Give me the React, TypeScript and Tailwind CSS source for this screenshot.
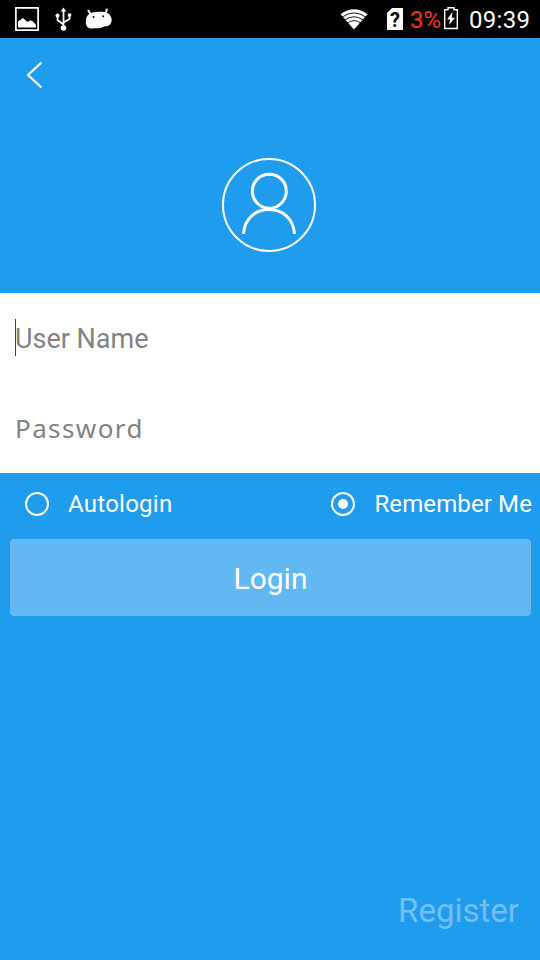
import { clsx } from "clsx";

function StatusBar() {
  return (
    <header className="flex h-[38px] items-center bg-black text-2xl leading-[38px] text-white">
      <svg className="ml-[15px] h-6 w-6" viewBox="0 0 24 24" fill="none">
        <path d="M.9 .9H23.1V23.1H.9Z" stroke="#fff" strokeWidth="1.7" />
        <path d="M3 20.5V14.5L8 11L12.5 15L15 13.5L17.5 14L21 18V20.5Z" fill="#fff" />
      </svg>
      <svg className="ml-4 h-6 w-[17px]" viewBox="0 0 17 24" fill="none" stroke="#fff" strokeWidth="1.8">
        <path d="M8.5 3V21M2.5 9V13L8.5 17.5M14.5 9V12L8.5 15.5" />
        <path d="M5.7 4.5L8.5 .5L11.3 4.5ZM12.8 6.5H16.2V9.5H12.8Z" fill="#fff" stroke="none" />
        <circle cx="2.5" cy="8.5" r="2" fill="#fff" stroke="none" />
        <circle cx="8.5" cy="21" r="2.8" fill="#fff" stroke="none" />
      </svg>
      <svg className="ml-[13px] h-6 w-[27px]" viewBox="0 0 27 24">
        <path d="M3.4 3.6L5.5 7M21.8 2.4L20.8 6" stroke="#fff" strokeWidth="2" strokeLinecap="round" />
        <path
          d="M0.8 14.5C1 9 4 6 9 5.3C12 4.7 14 5 16.5 4.8C21.5 4.4 26 7.5 26.6 12C27 16.5 24.5 19.3 20.5 19.3C18.5 19.3 17.5 20.8 14 21.2C11.5 21.4 10.5 20.8 8 21.4C3.5 22.2 0.7 19.5 0.8 14.5Z"
          fill="#fff"
        />
        <circle cx="8.5" cy="10" r="1" />
        <circle cx="18.2" cy="9.2" r="1" />
      </svg>

      <svg className="mt-px ml-[228px] h-[21px] w-7" viewBox="0 0 28 21" fill="none">
        <path d="M0.5 5.3Q14 -4.8 27.5 5.3L14 20.5Z" fill="#fff" />
        <path d="M2 8.2Q14 -.4 26 8.2M4.3 11.3Q14 4.2 23.7 11.3M7 14.2Q14 9 21 14.2" stroke="#000" strokeWidth=".9" />
      </svg>
      <span className="relative ml-[19px] h-[22px] w-4">
        <svg className="h-[22px] w-4" viewBox="0 0 16 22">
          <path d="M5 0H16V22H0V5Z" fill="#fff" />
        </svg>
        <span className="absolute inset-0 text-center text-xl leading-[24px] font-bold text-black">?</span>
      </span>
      <span className="ml-[7px] w-[34px] pt-px text-[#f8371f]">3%</span>
      <svg className="-mt-[1px] h-[23px] w-[14px]" viewBox="0 0 14 23" fill="none">
        <path d="M.7 2.7H4V.7H10V2.7H13.3V21.5H.7Z" stroke="#fff" strokeWidth="1.4" />
        <path d="M8.5 5L3 12.5H6.2L5 18L11 10.7H7.8Z" fill="#fff" />
      </svg>
      <time className="ml-[11px] pt-px tracking-[0.3px]">09:39</time>
    </header>
  );
}

function Radio({ label, checked, className }: { label: string; checked?: boolean; className?: string }) {
  return (
    <label className={clsx("flex items-center text-2xl leading-[62px]", className)}>
      <span className="mr-[19px] flex h-6 w-6 items-center justify-center rounded-full border-2 border-white">
        {checked && <span className="h-[10px] w-[10px] rounded-full bg-white" />}
      </span>
      {label}
    </label>
  );
}

export default function App() {
  return (
    <main className="flex h-[960px] w-[540px] flex-col overflow-hidden bg-[#209cee] font-[Roboto,sans-serif] text-white">
      <StatusBar />

      <section className="flex h-[255px] flex-col">
        <svg className="mt-[23px] ml-[26px] h-7 w-[17px] shrink-0" viewBox="0 0 17 28" fill="none" stroke="#fff" strokeWidth="2.2">
          <path d="M15.5 1.5L2 14L15.5 26.5" />
        </svg>
        <svg className="mt-[69px] ml-[222px] h-[94px] w-[94px] shrink-0" viewBox="0 0 94 94" fill="none" stroke="#fff">
          <circle cx="47" cy="47" r="46" strokeWidth="2" />
          <circle cx="47.3" cy="33.2" r="17" strokeWidth="3" />
          <path d="M21.5 76C22.5 61 33 51.5 47 51.5S71.5 61 72.5 76" strokeWidth="3" />
        </svg>
      </section>

      <section className="flex h-[180px] flex-col bg-white pl-[15px] text-[27px] text-[#828282]">
        <div className="flex h-[90px] items-center">
          <span className="-mr-px mb-[2px] h-[37px] w-px bg-[#404040]" />
          <span className="pt-[2px]">User Name</span>
        </div>
        <div className="flex h-[90px] items-center pt-px font-['Noto_Sans',sans-serif] text-[26px] tracking-[1.4px]">
          Password
        </div>
      </section>

      <div className="flex h-[62px] justify-between pr-2 pl-[25px]">
        <Radio label="Autologin" className="tracking-[0.25px]" />
        <Radio label="Remember Me" checked className="tracking-[0.12px]" />
      </div>

      <button className="mx-[10px] mt-1 h-[77px] w-[521px] rounded border border-[#6dbaee] bg-[#62b8f2] pt-[2px] text-[30px]">
        Login
      </button>

      <a className="mt-auto mr-[21px] mb-[25px] self-end text-[33px] leading-[48px] text-[#71bff4]">Register</a>
    </main>
  );
}
